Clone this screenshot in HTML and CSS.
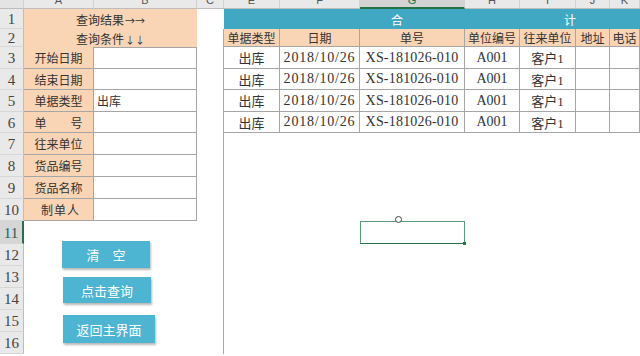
FILE: index.html
```html
<!DOCTYPE html>
<html lang="zh">
<head>
<meta charset="utf-8">
<title>查询</title>
<link rel="stylesheet" href="styles.css">
</head>
<body>
<div class="sheet">
  <!-- column headers -->
  <div class="ch corner"></div>
  <div class="ch"><span>A</span></div>
  <div class="ch"><span>B</span></div>
  <div class="ch"><span>C</span></div>
  <div class="ch"><span>E</span></div>
  <div class="ch"><span>F</span></div>
  <div class="ch ch-sel"><span>G</span></div>
  <div class="ch"><span>H</span></div>
  <div class="ch"><span>I</span></div>
  <div class="ch"><span>J</span></div>
  <div class="ch"><span>K</span></div>

  <!-- row 1 -->
  <div class="rh">1</div>
  <div class="title">
    <div class="title-line">查询结果<span class="arr">→→</span></div>
    <div class="title-line">查询条件<span class="arr">↓↓</span></div>
  </div>
  <div class="blank"></div>
  <div class="banner"><span>合</span><span>计</span></div>

  <!-- row 2 -->
  <div class="rh">2</div>
  <div class="fz"></div>
  <div class="th">单据类型</div>
  <div class="th">日期</div>
  <div class="th">单号</div>
  <div class="th">单位编号</div>
  <div class="th">往来单位</div>
  <div class="th">地址</div>
  <div class="th">电话</div>

  <!-- row 3 -->
  <div class="rh">3</div>
  <div class="lab">开始日期</div>
  <div class="inp inp-first"></div>
  <div class="fz"></div>
  <div class="td">出库</div>
  <div class="td date">2018/10/26</div>
  <div class="td code">XS-181026-010</div>
  <div class="td unit">A001</div>
  <div class="td">客户1</div>
  <div class="td"></div>
  <div class="td"></div>

  <!-- row 4 -->
  <div class="rh">4</div>
  <div class="lab">结束日期</div>
  <div class="inp"></div>
  <div class="fz"></div>
  <div class="td">出库</div>
  <div class="td date">2018/10/26</div>
  <div class="td code">XS-181026-010</div>
  <div class="td unit">A001</div>
  <div class="td">客户1</div>
  <div class="td"></div>
  <div class="td"></div>

  <!-- row 5 -->
  <div class="rh">5</div>
  <div class="lab">单据类型</div>
  <div class="inp inp-val">出库</div>
  <div class="fz"></div>
  <div class="td">出库</div>
  <div class="td date">2018/10/26</div>
  <div class="td code">XS-181026-010</div>
  <div class="td unit">A001</div>
  <div class="td">客户1</div>
  <div class="td"></div>
  <div class="td"></div>

  <!-- row 6 -->
  <div class="rh">6</div>
  <div class="lab">单　　号</div>
  <div class="inp"></div>
  <div class="fz"></div>
  <div class="td">出库</div>
  <div class="td date">2018/10/26</div>
  <div class="td code">XS-181026-010</div>
  <div class="td unit">A001</div>
  <div class="td">客户1</div>
  <div class="td"></div>
  <div class="td"></div>

  <!-- row 7 -->
  <div class="rh">7</div>
  <div class="lab">往来单位</div>
  <div class="inp"></div>
  <div class="fz"></div>
  <div class="blank"></div><div class="blank"></div><div class="blank"></div><div class="blank"></div><div class="blank"></div><div class="blank"></div><div class="blank"></div>

  <!-- row 8 -->
  <div class="rh">8</div>
  <div class="lab">货品编号</div>
  <div class="inp"></div>
  <div class="fz"></div>
  <div class="blank"></div><div class="blank"></div><div class="blank"></div><div class="blank"></div><div class="blank"></div><div class="blank"></div><div class="blank"></div>

  <!-- row 9 -->
  <div class="rh">9</div>
  <div class="lab">货品名称</div>
  <div class="inp"></div>
  <div class="fz"></div>
  <div class="blank"></div><div class="blank"></div><div class="blank"></div><div class="blank"></div><div class="blank"></div><div class="blank"></div><div class="blank"></div>

  <!-- row 10 -->
  <div class="rh">10</div>
  <div class="lab lab-short">制单人</div>
  <div class="inp"></div>
  <div class="fz"></div>
  <div class="blank"></div><div class="blank"></div><div class="blank"></div><div class="blank"></div><div class="blank"></div><div class="blank"></div><div class="blank"></div>

  <!-- row 11 -->
  <div class="rh rh-sel">11</div>
  <div class="buttons">
    <button class="btn btn-clear">清　空</button>
    <button class="btn btn-query">点击查询</button>
    <button class="btn btn-home">返回主界面</button>
  </div>
  <div class="fz"></div>
  <div class="blank"></div><div class="blank"></div>
  <div class="selected"><span class="cursor"></span><span class="handle"></span></div>
  <div class="blank"></div><div class="blank"></div><div class="blank"></div><div class="blank"></div>

  <!-- row 12 -->
  <div class="rh">12</div>
  <div class="fz"></div>
  <div class="blank"></div><div class="blank"></div><div class="blank"></div><div class="blank"></div><div class="blank"></div><div class="blank"></div><div class="blank"></div>

  <!-- row 13 -->
  <div class="rh">13</div>
  <div class="fz"></div>
  <div class="blank"></div><div class="blank"></div><div class="blank"></div><div class="blank"></div><div class="blank"></div><div class="blank"></div><div class="blank"></div>

  <!-- row 14 -->
  <div class="rh">14</div>
  <div class="fz"></div>
  <div class="blank"></div><div class="blank"></div><div class="blank"></div><div class="blank"></div><div class="blank"></div><div class="blank"></div><div class="blank"></div>

  <!-- row 15 -->
  <div class="rh">15</div>
  <div class="fz"></div>
  <div class="blank"></div><div class="blank"></div><div class="blank"></div><div class="blank"></div><div class="blank"></div><div class="blank"></div><div class="blank"></div>

  <!-- row 16 -->
  <div class="rh">16</div>
  <div class="fz"></div>
  <div class="blank"></div><div class="blank"></div><div class="blank"></div><div class="blank"></div><div class="blank"></div><div class="blank"></div><div class="blank"></div>
</div>
</body>
</html>
```

FILE: styles.css
```css
* { box-sizing: border-box; }

html, body {
  margin: 0;
  padding: 0;
  width: 640px;
  height: 356px;
  overflow: hidden;
  background: #ffffff;
}

body {
  font-family: "Liberation Serif", "Noto Sans CJK SC", serif;
  color: #333333;
}

.sheet {
  display: grid;
  grid-template-columns: 24px 70px 103px 27px 56px 80px 105px 55px 56px 34px 30px;
  grid-template-rows: 9px 20px 18px 22px 21px 22px 21px 22px 22px 22px 22px 23px 22px 22px 22px 22px 22px;
  width: 640px;
  background: #ffffff;
}

/* column headers */
.ch {
  background: #e9e9e9;
  border-right: 1px solid #d2d2d2;
  border-bottom: 1px solid #bdbdbd;
  overflow: hidden;
  text-align: center;
  font-family: "Liberation Sans", sans-serif;
  font-size: 11px;
  color: #555555;
}
.ch span {
  display: block;
  margin-top: -7px;
  line-height: 14px;
}
.ch-sel {
  background: #d3d3d3;
  border-bottom: 2px solid #217346;
  color: #217346;
}
.corner { background: #e4e4e4; }

/* row headers */
.rh {
  background: #e9e9e9;
  border-right: 1px solid #bdbdbd;
  border-bottom: 1px solid #d6d6d6;
  display: flex;
  align-items: center;
  justify-content: center;
  font-family: "Liberation Serif", serif;
  font-size: 15px;
  color: #444444;
  padding-top: 2px;
}
.rh-sel {
  background: #d6d6d6;
  border-right: 2px solid #217346;
  color: #2d5d48;
}

/* top left merged title */
.title {
  grid-column: span 2;
  grid-row: span 2;
  background: #fad5b5;
  display: flex;
  flex-direction: column;
  align-items: center;
  padding-top: 2px;
  font-family: "Noto Sans CJK SC", sans-serif;
  font-size: 12px;
  color: #333333;
}
.title-line {
  line-height: 18px;
  height: 20px;
}
.arr {
  font-size: 10px;
  margin-left: 1px;
}

.blank { background: #ffffff; }

.fz {
  background: #ffffff;
  border-right: 1px solid #a9a9a9;
}

/* teal banner */
.banner {
  grid-column: span 7;
  background: #41a8c3;
  color: #ffffff;
  display: flex;
  align-items: center;
  gap: 161px;
  padding-left: 167px;
  font-family: "Noto Sans CJK SC", sans-serif;
  font-size: 12px;
}

/* table header */
.th {
  background: #fad5b5;
  border-right: 1px solid #a6a6a6;
  border-bottom: 1px solid #a6a6a6;
  display: flex;
  align-items: center;
  justify-content: center;
  font-family: "Noto Sans CJK SC", sans-serif;
  font-size: 12px;
  color: #333333;
  white-space: nowrap;
  overflow: hidden;
}

/* data cells */
.td {
  background: #ffffff;
  border-right: 1px solid #a6a6a6;
  border-bottom: 1px solid #a6a6a6;
  display: flex;
  align-items: center;
  justify-content: center;
  font-size: 13px;
  color: #333333;
  white-space: nowrap;
  overflow: hidden;
}
.date { font-size: 14px; letter-spacing: 0.8px; }
.code { font-size: 14px; letter-spacing: 0.2px; }
.unit { font-size: 14px; }

/* left search form */
.lab {
  background: #fad5b5;
  border-right: 1px solid #a6a6a6;
  border-bottom: 1px solid #a6a6a6;
  display: flex;
  align-items: center;
  justify-content: center;
  font-family: "Noto Sans CJK SC", sans-serif;
  font-size: 12px;
  color: #333333;
  white-space: nowrap;
}
.lab-short { letter-spacing: 1px; padding-left: 4px; }

.inp {
  background: #ffffff;
  border-right: 1px solid #a6a6a6;
  border-bottom: 1px solid #a6a6a6;
  display: flex;
  align-items: center;
  padding-left: 3px;
  font-family: "Noto Sans CJK SC", sans-serif;
  font-size: 12px;
  color: #333333;
}
.inp-first { border-top: 1px solid #a6a6a6; }

/* button area (shapes over the sheet) */
.buttons {
  grid-column: span 2;
  grid-row: span 6;
  background: #ffffff;
  display: flex;
  flex-direction: column;
  align-items: flex-start;
  padding: 20px 0 0 38px;
}
.btn {
  border: none;
  background: #4db4d2;
  color: #ffffff;
  font-family: "Noto Sans CJK SC", sans-serif;
  font-size: 13px;
  box-shadow: 1px 2px 2px rgba(0, 0, 0, 0.28);
  padding: 0;
  cursor: pointer;
}
.btn-clear { width: 88px; height: 27px; }
.btn-query { width: 88px; height: 26px; margin: 9px 0 0 1px; }
.btn-home { width: 92px; height: 28px; margin: 12px 0 0 1px; }

/* selected cell */
.selected {
  position: relative;
  background: #ffffff;
  border: 1px solid #5d9a7b;
  border-bottom-color: #217346;
}
.cursor {
  position: absolute;
  left: 34px;
  top: -6px;
  width: 7px;
  height: 7px;
  border: 1.5px solid #444444;
  border-radius: 50%;
  background: #ffffff;
}
.handle {
  position: absolute;
  right: -2px;
  bottom: -2px;
  width: 3px;
  height: 3px;
  background: #217346;
}
```
